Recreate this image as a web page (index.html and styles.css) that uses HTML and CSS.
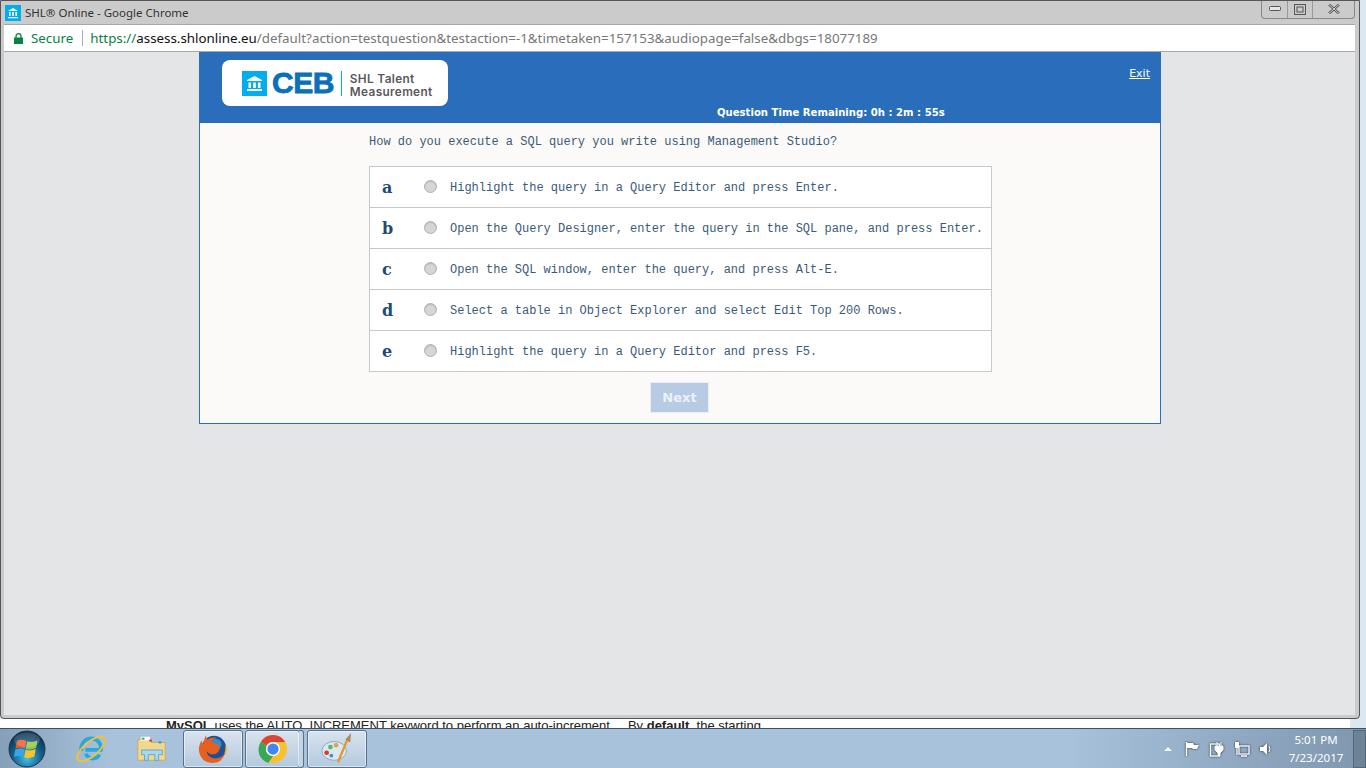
FILE: index.html
```html
<!DOCTYPE html>
<html lang="en">
<head>
    <meta charset="UTF-8">
    <meta name="viewport" content="width=device-width, initial-scale=1.0">
    <title>SHL Online - Google Chrome</title>
    <link rel="stylesheet" href="styles.css">
</head>
<body>
    <div class="window">
        <div class="titlebar">
            <svg class="favicon" viewBox="0 0 16 16" width="16" height="16">
                <rect width="16" height="16" fill="#00adef"/>
                <path d="M8 3 L13 6 H3 Z M3 12 H13 V13.2 H3 Z M4 7 H5.6 V11 H4 Z M7.2 7 H8.8 V11 H7.2 Z M10.4 7 H12 V11 H10.4 Z" fill="#fff"/>
            </svg>
            <span class="title">SHL® Online - Google Chrome</span>
            <div class="controls">
                <div class="ctl ctl-min"><svg viewBox="0 0 12 6" width="12" height="6"><rect x="0.5" y="0.5" width="11" height="4" rx="1" fill="#e6e6e6" stroke="#555"/></svg></div>
                <div class="ctl ctl-max"><svg viewBox="0 0 12 11" width="12" height="11"><rect x="0.5" y="0.5" width="11" height="10" fill="none" stroke="#555"/><rect x="3" y="3" width="6" height="5" fill="none" stroke="#555"/></svg></div>
                <div class="ctl ctl-close"><svg viewBox="0 0 12 10" width="12" height="10"><path d="M1 0.5 L11 9.5 M11 0.5 L1 9.5" stroke="#555" stroke-width="2.4" fill="none"/><path d="M1 0.5 L11 9.5 M11 0.5 L1 9.5" stroke="#eee" stroke-width="0.8" fill="none"/></svg></div>
            </div>
        </div>

        <div class="addressbar">
            <svg class="lock" viewBox="0 0 9 11" width="9" height="11">
                <path d="M2 5 V3.2 a2.5 2.5 0 0 1 5 0 V5" fill="none" stroke="#0b8043" stroke-width="1.3"/>
                <rect y="4.5" width="9" height="6.5" fill="#0b8043"/>
            </svg>
            <span class="secure">Secure</span>
            <span class="sep"></span>
            <span class="url"><span class="scheme">https://</span><span class="host">assess.shlonline.eu</span>/default?action=testquestion&amp;testaction=-1&amp;timetaken=157153&amp;audiopage=false&amp;dbgs=18077189</span>
        </div>

        <div class="viewport">
            <div class="page">
                <div class="header">
                    <div class="logo">
                        <svg viewBox="0 0 25 25" width="25" height="25">
                            <rect width="25" height="25" fill="#00adef"/>
                            <path d="M12.5 5 L20 9 V10 H5 V9 Z M5 18 H20 V20 H5 Z M6.5 11.5 H9 V17 H6.5 Z M11.2 11.5 H13.8 V17 H11.2 Z M16 11.5 H18.5 V17 H16 Z" fill="#fff"/>
                        </svg>
                        <span class="logo-ceb">CEB</span>
                        <span class="logo-line"></span>
                        <span class="logo-text">SHL Talent<br>Measurement</span>
                    </div>
                    <div class="timer">Question Time Remaining: 0h : 2m : 55s</div>
                    <a class="exit" href="#">Exit</a>
                </div>

                <div class="content">
                    <div class="question">How do you execute a SQL query you write using Management Studio?</div>
                    <div class="answers">
                        <div class="answer"><span class="letter">a</span><span class="radio"></span><span class="answer-text">Highlight the query in a Query Editor and press Enter.</span></div>
                        <div class="answer"><span class="letter">b</span><span class="radio"></span><span class="answer-text">Open the Query Designer, enter the query in the SQL pane, and press Enter.</span></div>
                        <div class="answer"><span class="letter">c</span><span class="radio"></span><span class="answer-text">Open the SQL window, enter the query, and press Alt-E.</span></div>
                        <div class="answer"><span class="letter">d</span><span class="radio"></span><span class="answer-text">Select a table in Object Explorer and select Edit Top 200 Rows.</span></div>
                        <div class="answer"><span class="letter">e</span><span class="radio"></span><span class="answer-text">Highlight the query in a Query Editor and press F5.</span></div>
                    </div>
                    <div class="next-row"><button class="next">Next</button></div>
                </div>
            </div>
        </div>
    </div>

    <div class="behind"><span class="behind-text"><b>MySQL</b> uses the AUTO_INCREMENT keyword to perform an auto-increment.&nbsp;&nbsp;&nbsp; By <b>default</b>, the starting</span></div>

    <div class="taskbar">
        <div class="start">
            <svg viewBox="0 0 38 38" width="38" height="38">
                <defs>
                    <radialGradient id="orb" cx="50%" cy="75%" r="70%">
                        <stop offset="0" stop-color="#45c4ea"/>
                        <stop offset="0.55" stop-color="#14618f"/>
                        <stop offset="1" stop-color="#0d2e49"/>
                    </radialGradient>
                </defs>
                <circle cx="19" cy="19" r="18" fill="url(#orb)" stroke="#20384c"/>
                <path d="M9 11 Q13 8.500 18.300 11 L16.800 18.500 Q12 16.500 7.500 18.500 Z" fill="#ee5a2a"/>
                <path d="M19.300 11.200 Q24 13 29.500 10.500 L28 18 Q23 20.500 17.800 18.700 Z" fill="#93c83e"/>
                <path d="M7.300 19.500 Q12 17.500 16.600 19.500 L15.200 27 Q10.500 25 6 27 Z" fill="#35a7e4"/>
                <path d="M17.600 19.700 Q23 21.500 27.800 19 L26.300 26.500 Q21 29 16.200 27.200 Z" fill="#fcc22d"/>
                <ellipse cx="19" cy="10" rx="13" ry="7.500" fill="#fff" opacity="0.16"/>
            </svg>
        </div>
        <div class="task task-plain">
            <svg viewBox="0 0 34 34" width="32" height="32">
                <path d="M7 19 a10.500 10.500 0 1 1 20.500 -1 H11 M11.500 22 a8 8 0 0 0 14.500 1" fill="none" stroke="#29a8e0" stroke-width="4"/>
                <ellipse cx="17" cy="17" rx="18" ry="7.500" transform="rotate(-40 17 17)" fill="none" stroke="#f4c22b" stroke-width="2"/>
            </svg>
        </div>
        <div class="task task-plain">
            <svg viewBox="0 0 34 34" width="32" height="32">
                <path d="M2 7 H14 L16 10 H31 V29 H2 Z" fill="#f0d98c" stroke="#c9ac5c"/>
                <rect x="5" y="4" width="10" height="4" fill="#fff"/>
                <rect x="6" y="5" width="3" height="2" fill="#2fb34a"/>
                <rect x="14" y="7" width="3" height="2" fill="#d8392b"/>
                <rect x="24" y="9" width="3" height="2" fill="#2a8fe0"/>
                <path d="M6 18 H28 V23 H24 V29 H20 V23 H13 V29 H9 V23 H6 Z" fill="#a9d7ee" stroke="#5aa6cf"/>
            </svg>
        </div>
        <div class="task task-btn task-first">
            <svg viewBox="0 0 34 34" width="32" height="32">
                <circle cx="18" cy="16" r="13" fill="#1d4f9c"/>
                <circle cx="20" cy="12" r="6" fill="#2f8fcf"/>
                <path d="M30 22 A13.500 13.500 0 0 0 31 14" fill="none" stroke="#f5b92e" stroke-width="2"/>
                <path d="M10 2 Q9 5 11 7 Q15 4 21 5 Q16 7 15 10 Q21 10 24 14 Q25 19 20 22 Q14 24 10 19 Q11 26 19 27 Q26 27 30 21 Q27 32 16 32 Q4 31 2 19 Q2 12 5 8 Q5 11 7 12 Q7 6 10 2 Z" fill="#e8601f"/>
            </svg>
        </div>
        <div class="task task-btn task-chrome">
            <svg viewBox="0 0 32 32" width="30" height="30">
                <circle cx="16" cy="16" r="15" fill="#fbc02d"/>
                <path d="M16 1 A15 15 0 0 1 29 8.500 H16 A7.500 7.500 0 0 0 9.500 12.200 L3 8.500 A15 15 0 0 1 16 1 Z" fill="#db4437"/>
                <path d="M3 8.500 L9.500 12.200 A7.500 7.500 0 0 0 16 23.500 L11 31 A15 15 0 0 1 3 8.500 Z" fill="#3aa757"/>
                <circle cx="16" cy="16" r="7.500" fill="#fff"/>
                <circle cx="16" cy="16" r="6" fill="#4285f4"/>
            </svg>
        </div>
        <div class="task-edge"></div>
        <div class="task task-btn task-paint">
            <svg viewBox="0 0 34 34" width="32" height="32">
                <ellipse cx="14" cy="19" rx="13" ry="10" fill="#d9e8f3" stroke="#8aa9bf"/>
                <circle cx="6" cy="21" r="2.500" fill="#d8392b"/>
                <circle cx="10" cy="15" r="2.500" fill="#5cb85c"/>
                <circle cx="16" cy="13" r="2.500" fill="#e8a33a"/>
                <circle cx="11" cy="24" r="2" fill="#3f8fd6"/>
                <path d="M28 7 L18 31" stroke="#e09a2b" stroke-width="2.500"/>
                <path d="M26 7 L32 0 L31 10 Z" fill="#a88a5e"/>
            </svg>
        </div>

        <div class="tray">
            <svg class="tray-arrow" viewBox="0 0 8 4" width="8" height="4"><path d="M4 0 L8 4 H0 Z" fill="#f2f5f8"/></svg>
            <svg class="tray-icon" viewBox="0 0 16 16" width="16" height="16"><path d="M2.500 1 V15" stroke="#fff" stroke-width="1.400"/><path d="M3 2 H9 L10 4 H15 L13 8 H9 L8 7 H3 Z" fill="#fff"/></svg>
            <svg class="tray-icon" viewBox="0 0 16 16" width="16" height="16"><rect x="1.500" y="3" width="9" height="12" fill="none" stroke="#fff" stroke-width="1.300"/><path d="M6 5 H14 V9 L11 12 V15 H9 V12 L6 9 Z M8 1 V5 M12 1 V5" fill="#fff" stroke="#fff" stroke-width="1"/></svg>
            <svg class="tray-icon" viewBox="0 0 16 16" width="16" height="16"><rect x="5" y="5" width="10" height="8" fill="none" stroke="#fff" stroke-width="1.300"/><rect x="1" y="1" width="4" height="6" fill="#fff"/><path d="M3 7 V14 M7 15 H13" stroke="#fff" stroke-width="1.300"/></svg>
            <svg class="tray-icon" viewBox="0 0 14 16" width="14" height="16"><path d="M1 6 H4 L8 2 V14 L4 10 H1 Z" fill="#fff"/><path d="M10 5 Q12 8 10 11" stroke="#fff" fill="none"/></svg>
            <div class="clock"><div>5:01 PM</div><div>7/23/2017</div></div>
        </div>
        <div class="show-desktop"></div>
    </div>
</body>
</html>
```

FILE: styles.css
```css
html, body {
    margin: 0;
    padding: 0;
    height: 768px;
    overflow: hidden;
}

body {
    background-color: #dbe7f1;
    font-family: 'Liberation Sans', Arial, sans-serif;
    display: flex;
    flex-direction: column;
}

/* browser window */
.window {
    height: 719px;
    box-sizing: border-box;
    flex: none;
    display: flex;
    flex-direction: column;
    background-color: #cbcbcb;
    border: 1px solid #555;
    border-bottom-left-radius: 4px;
    border-bottom-right-radius: 4px;
    margin-right: 6px;
    padding: 0 4px 3px 3px;
}

.titlebar {
    height: 23px;
    flex: none;
    display: flex;
    align-items: center;
    padding-left: 1px;
}

.favicon {
    margin-right: 4px;
    flex: none;
}

.title {
    font-family: 'Noto Sans', 'Open Sans', sans-serif;
    font-size: 11.5px;
    color: #333;
}

.controls {
    margin-left: auto;
    margin-top: -6px;
    display: flex;
    height: 17px;
    border: 1px solid #888;
    border-top: none;
    border-radius: 0 0 4px 4px;
}

.ctl {
    display: flex;
    align-items: center;
    justify-content: center;
    border-left: 1px solid #999;
}

.ctl:first-child {
    border-left: none;
}

.ctl-min { width: 25px; }
.ctl-max { width: 24px; }
.ctl-close { width: 41px; }

.addressbar {
    height: 28px;
    flex: none;
    box-sizing: border-box;
    display: flex;
    align-items: center;
    background-color: #fff;
    border-top: 1px solid #a8a8a8;
    border-bottom: 1px solid #a8a8a8;
    padding-left: 10px;
    font-size: 13.35px;
    font-family: 'Noto Sans', 'Open Sans', sans-serif;
}

.secure {
    color: #0b8043;
    margin-left: 8px;
}

.sep {
    width: 1px;
    height: 16px;
    background-color: #aaa;
    margin: 0 7px 0 9px;
}

.url {
    color: #777;
    white-space: nowrap;
}

.scheme { color: #0b8043; }
.host { color: #111; }

.viewport {
    flex: 1;
    background-color: #e4e5e7;
}

/* test page */
.page {
    width: 962px;
    margin-left: 195px;
}

.header {
    height: 71px;
    background-color: #2a6ebb;
    position: relative;
}

.logo {
    position: absolute;
    left: 23px;
    top: 8px;
    width: 226px;
    height: 46px;
    box-sizing: border-box;
    background-color: #fff;
    border-radius: 8px;
    padding-left: 20px;
    display: flex;
    align-items: center;
}

.logo-ceb {
    font-weight: bold;
    font-size: 30px;
    letter-spacing: -0.5px;
    color: #0a70b7;
    margin-left: 5px;
    -webkit-text-stroke: 0.8px #0a70b7;
}

.logo-line {
    width: 1px;
    height: 25px;
    background-color: #00adef;
    margin-left: 7px;
}

.logo-text {
    font-family: 'Inter', sans-serif;
    font-weight: 600;
    font-size: 11.8px;
    line-height: 13px;
    letter-spacing: 0.35px;
    color: #58595b;
    margin-left: 8px;
    margin-top: 6px;
    white-space: nowrap;
}

.timer {
    position: absolute;
    left: 518px;
    top: 55px;
    font-family: 'DejaVu Sans', Verdana, sans-serif;
    font-size: 10.1px;
    font-weight: bold;
    color: #fff;
    white-space: nowrap;
}

.exit {
    position: absolute;
    right: 11px;
    top: 15px;
    font-family: 'DejaVu Sans', Verdana, sans-serif;
    font-size: 11px;
    color: #fff;
}

.content {
    height: 301px;
    box-sizing: border-box;
    background-color: #fbfaf8;
    border: 1px solid #2a6ebb;
    border-top: none;
    padding: 12px 0 0 169px;
}

.question {
    font-family: 'Liberation Mono', 'Courier New', monospace;
    font-size: 12px;
    line-height: 14px;
    color: #3b5a7a;
}

.answers {
    width: 623px;
    box-sizing: border-box;
    margin-top: 17px;
    background-color: #fff;
    border: 1px solid #c8c8c8;
}

.answer {
    height: 41px;
    box-sizing: border-box;
    display: flex;
    align-items: center;
    border-top: 1px solid #c8c8c8;
}

.answer:first-child {
    height: 40px;
    border-top: none;
}

.letter {
    width: 54px;
    box-sizing: border-box;
    padding-left: 12px;
    font-family: 'DejaVu Serif', 'Liberation Serif', serif;
    font-weight: bold;
    font-size: 16px;
    color: #1f4a75;
}

.radio {
    width: 11px;
    height: 11px;
    border: 1px solid #b0b0b0;
    border-radius: 50%;
    background-color: #d6d6d6;
    box-shadow: inset 0 1px 1px #bbb;
    margin-top: -1px;
    flex: none;
}

.answer-text {
    margin-left: 13px;
    margin-top: 1px;
    font-family: 'Liberation Mono', 'Courier New', monospace;
    font-size: 12px;
    color: #3b5a7a;
    white-space: nowrap;
}

.next-row {
    width: 621px;
    display: flex;
    justify-content: center;
    margin-top: 10px;
}

.next {
    width: 59px;
    height: 31px;
    box-sizing: border-box;
    background-color: #b7cbe5;
    border: 1px solid #ebedf0;
    color: #ecf1f8;
    font-family: 'DejaVu Sans', Verdana, sans-serif;
    font-weight: bold;
    font-size: 13px;
    padding: 0;
}

/* page behind the browser, only its top shows */
.behind {
    height: 9px;
    flex: none;
    overflow: hidden;
    background-color: #fff;
    margin-right: 16px;
    padding-left: 166px;
    font-size: 13px;
    line-height: 13px;
    color: #222;
    white-space: nowrap;
}

/* windows taskbar */
.taskbar {
    height: 40px;
    flex: none;
    box-sizing: border-box;
    display: flex;
    align-items: center;
    background: linear-gradient(90deg, #87a0ba 0, #a9c2dc 8%, #a9c2dc 78%, #7e96ae 100%);
    border-top: 1px solid #3f4f5f;
}

.start {
    width: 60px;
    box-sizing: border-box;
    padding-left: 8px;
    display: flex;
}

.task {
    display: flex;
    align-items: center;
    justify-content: center;
    height: 38px;
    box-sizing: border-box;
}

.task-plain {
    width: 61px;
}

.task-btn {
    width: 60px;
    border: 1px solid #56718c;
    border-radius: 3px;
    background: linear-gradient(180deg, #d8e3ee, #b4c9de);
    box-shadow: inset 0 0 0 1px rgba(255, 255, 255, 0.5);
}

.task-first { margin-left: 1px; margin-right: 2px; }
.task-chrome { width: 55px; }

.task-edge {
    width: 5px;
    height: 38px;
    box-sizing: border-box;
    border: 1px solid #56718c;
    border-left: none;
    border-radius: 0 3px 3px 0;
    margin-right: 3px;
    margin-left: -1px;
    background-color: #c4d4e4;
}

.tray {
    margin-left: auto;
    display: flex;
    align-items: center;
    gap: 9px;
}

.tray-arrow {
    margin-right: 3px;
}

.tray-icon {
    filter: drop-shadow(0 0 1px #1c2630);
}

.clock {
    font-family: 'Noto Sans', 'Open Sans', sans-serif;
    font-size: 11.5px;
    line-height: 18px;
    color: #fff;
    text-align: center;
    margin-left: 5px;
    margin-right: 6px;
    width: 58px;
}

.show-desktop {
    width: 13px;
    height: 38px;
    margin-left: 2px;
    background-color: #6d8398;
    border: 1px solid #56687a;
    box-sizing: border-box;
}
```
